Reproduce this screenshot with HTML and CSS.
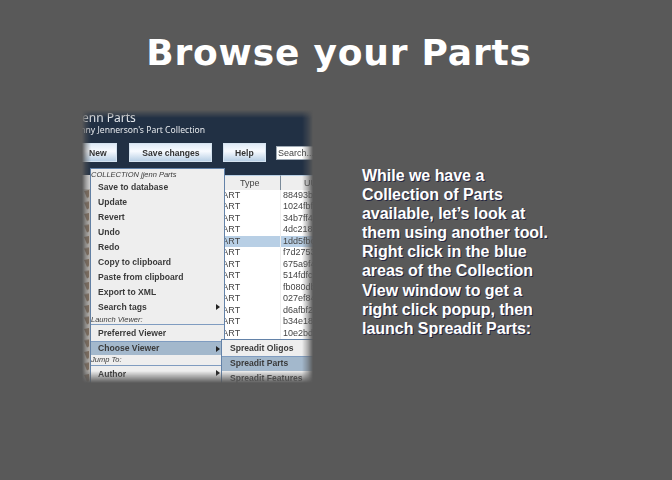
FILE: index.html
```html
<!DOCTYPE html>
<html lang="en">
<head>
<meta charset="utf-8">
<title>Browse your Parts</title>
<link rel="stylesheet" href="styles.css">
</head>
<body>
<h1>Browse your Parts</h1>
<main>
<section class="shot">
  <header class="head">
    <div class="name">jenn Parts</div>
    <div class="sub">Jenny Jennerson's Part Collection</div>
    <div class="bar"><span class="btn new"><b>New</b></span><span class="btn save"><b>Save changes</b></span><span class="btn help"><b>Help</b></span><span class="search">Search...</span></div>
  </header>
  <div class="content">
    <svg class="strip" width="12" height="212"><defs><pattern id="w" y="14" width="12" height="11.5" patternUnits="userSpaceOnUse"><rect width="12" height="11.5" fill="#c0bcb7"/><path d="M6 2L11 1L11 8L9 9Z" fill="#85715f"/></pattern></defs><rect width="12" height="212" fill="#ddd"/><rect y="14" width="12" height="198" fill="url(#w)"/></svg>
    <div class="table">
      <div class="row th"><span>Type</span><span>UUID</span></div>
      <div class="row"><span>PART</span><span>88493b3a</span></div>
      <div class="row"><span>PART</span><span>1024fbf6</span></div>
      <div class="row"><span>PART</span><span>34b7ff4b</span></div>
      <div class="row"><span>PART</span><span>4dc218c1</span></div>
      <div class="row sel"><span>PART</span><span>1dd5fbcf</span></div>
      <div class="row"><span>PART</span><span>f7d27532</span></div>
      <div class="row"><span>PART</span><span>675a9f4e</span></div>
      <div class="row"><span>PART</span><span>514fdfc8</span></div>
      <div class="row"><span>PART</span><span>fb080dbb</span></div>
      <div class="row"><span>PART</span><span>027ef84c</span></div>
      <div class="row"><span>PART</span><span>d6afbf2c</span></div>
      <div class="row"><span>PART</span><span>b34e189a</span></div>
      <div class="row"><span>PART</span><span>10e2bdc4</span></div>
      <div class="row"><span></span><span></span></div>
    </div>
  </div>
  <div class="menu">
    <div class="label first">COLLECTION jjenn Parts</div>
    <div class="item"><b>Save to database</b></div>
    <div class="item"><b>Update</b></div>
    <div class="item"><b>Revert</b></div>
    <div class="item"><b>Undo</b></div>
    <div class="item"><b>Redo</b></div>
    <div class="item"><b>Copy to clipboard</b></div>
    <div class="item"><b>Paste from clipboard</b></div>
    <div class="item"><b>Export to XML</b></div>
    <div class="item more"><b>Search tags</b></div>
    <div class="label">Launch Viewer:</div>
    <div class="item line pref"><b>Preferred Viewer</b></div>
    <div class="item line on more"><b>Choose Viewer</b></div>
    <div class="label jump">Jump To:</div>
    <div class="item line more"><b>Author</b></div>
  </div>
  <div class="menu submenu">
    <div class="item"><b>Spreadit Oligos</b></div>
    <div class="item on"><b>Spreadit Parts</b></div>
    <div class="item"><b>Spreadit Features</b></div>
  </div>
</section>
<p>While we have a<br>Collection of Parts<br>available, let’s look at<br>them using another tool.<br>Right click in the blue<br>areas of the Collection<br>View window to get a<br>right click popup, then<br>launch Spreadit Parts:</p>
</main>
</body>
</html>
```
FILE: styles.css
```css
* { box-sizing: border-box; }
body { margin: 0; width: 672px; height: 480px; overflow: hidden; background: #595959; font-family: "Liberation Sans", Arial, sans-serif; }
h1 { margin: 0; height: 108px; padding: 30px 0 0 6px; text-align: center; color: #fff; font: bold 36px/46px "DejaVu Sans", Verdana, sans-serif; letter-spacing: 0.8px; white-space: nowrap; }
main { display: flex; padding-left: 78px; }
.shot { position: relative; width: 238px; height: 278px; overflow: hidden; background: #efefef; color: #3a3a3a; font-size: 9px; white-space: nowrap;
  mask-image: linear-gradient(to right, transparent 4px, #0008 8px, #000 13px, #000 224px, #0008 230px, transparent 235px), linear-gradient(to bottom, transparent 2px, #000 10px, #000 263px, transparent 275px);
  mask-composite: intersect; }
.head { height: 67px; background: #213044; color: #e6e9ed; padding-top: 2px; font-family: "Noto Sans", sans-serif; }
.name { height: 14px; line-height: 15px; font-size: 12px; margin-left: 1px; }
.sub { height: 11px; line-height: 12px; font-size: 8.6px; margin-left: -5px; }
.bar { display: flex; align-items: center; margin-top: 8px; height: 19px; font-family: "Liberation Sans", sans-serif; }
.btn { flex: none; display: flex; justify-content: center; height: 19px; line-height: 18px; border: 1px solid #d5e3f0; background: linear-gradient(#dfeaf6, #f8fbff 42%, #b8cfe5); color: #333; }
.btn b, .item b { font-size: 9.6px; display: inline-block; transform: scaleX(.895); }
.new { width: 39px; }
.save { width: 83px; margin-left: 12px; }
.help { width: 43px; margin-left: 11px; }
.search { flex: none; width: 50px; height: 14px; line-height: 13px; margin-left: 10px; padding-left: 1px; background: #fff; border: 1px solid #a0abb6; color: #444; }
.content { display: flex; }
.strip { flex: none; }
.table { width: 226px; background: #fff; }
.row { display: grid; grid-template-columns: 191px 1fr; height: 11.53px; line-height: 11.5px; color: #444; }
.row span { padding-left: 2px; background: #fff; }
.row span:first-child { padding-left: 127px; border-right: 1px solid #eee; }
.row.th { height: 14.7px; line-height: 14px; }
.row.th span { background: #eee; border-bottom: 1px solid #7a8a99; padding-left: 23px; border-top: 1px solid #b8cfe5; }
.row.th span:first-child { padding-left: 150px; border-right: 1px solid #7a8a99; }
.row.sel span { background: #b8cfe5; }
.menu { position: absolute; left: 12px; top: 60px; width: 135px; height: 225px; background: #eee; border: 1px solid #6382a8; }
.item { position: relative; height: 15.05px; line-height: 15px; padding-left: 6.5px; }
.item b { transform: translateY(-1px) scaleX(.895); transform-origin: left center; }
.label { height: 9px; line-height: 9px; font-size: 7.5px; font-style: italic; }
.label.first { height: 10.5px; line-height: 12px; }
.line { border-top: 1px solid #7f9cc0; height: 17px; line-height: 17px; }
.label.jump { height: 9.5px; line-height: 10px; }
.on { background: #a3b8cc; }
.line.on { height: 14.5px; line-height: 13px; }
.more::after { content: ""; position: absolute; right: 4px; top: 4px; border: 3px solid transparent; border-left: 4px solid #222; border-right: 0; }
.submenu { left: 143px; top: 231px; width: 110px; height: 60px; }
.submenu .item { height: 15.2px; line-height: 15px; padding-left: 7.5px; }
.submenu .item:first-child { height: 16.3px; line-height: 17px; }
.submenu .on { border-top: 1px solid #7f9cc0; line-height: 14px; }
p { margin: 58px 0 0 46px; color: #fff; font-weight: bold; font-size: 16px; line-height: 19.1px; letter-spacing: -0.03px; text-shadow: 1px 1px 0 #252540; white-space: nowrap; }
```
